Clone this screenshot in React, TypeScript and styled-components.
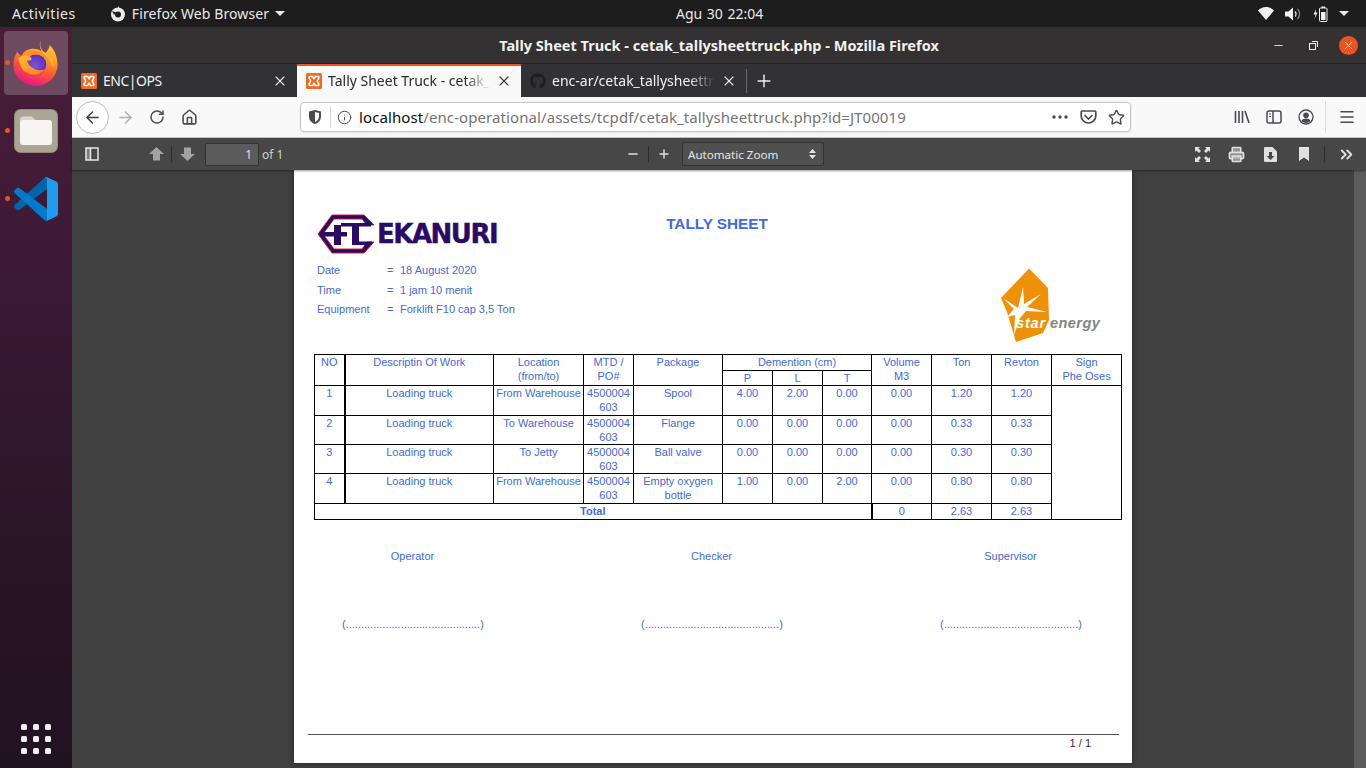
import React from 'react';
import styled, { createGlobalStyle } from 'styled-components';
import {
  ArrowLeft, ArrowRight, RotateCw, House, Info, Star, Menu, X, Plus, Minus,
  ChevronsRight, Printer,
} from 'lucide-react';
import { FaGithub } from 'react-icons/fa';

const GlobalStyle = createGlobalStyle`
  html, body { margin: 0; padding: 0; width: 1366px; height: 768px; overflow: hidden; background: #404040; }
  * { box-sizing: border-box; }
`;

const UI_FONT = `"Noto Sans", "Open Sans", sans-serif`;
const DOC_FONT = `"Liberation Sans", Arial, sans-serif`;
const DOC_BLUE = '#4169e1';

const Desktop = styled.div`
  width: 1366px;
  height: 768px;
  display: flex;
  flex-direction: column;
  font-family: ${UI_FONT};
  overflow: hidden;
`;

/* ---------- gnome top bar ---------- */
const TopBar = styled.div`
  height: 27px;
  flex: none;
  background: #1d1d1d;
  color: #e9e9e9;
  font-size: 14px;
  display: flex;
  align-items: center;
  padding: 0 12px;
`;
const TopLeft = styled.div`
  width: 664px;
  flex: none;
  display: flex;
  align-items: center;
`;
const Activities = styled.span`
  letter-spacing: 0.55px;
`;
const AppMenu = styled.div`
  display: flex;
  align-items: center;
  gap: 6px;
  margin-left: 34px;
  letter-spacing: 0.1px;
`;
const Caret = styled.span`
  width: 0;
  height: 0;
  border-left: 5px solid transparent;
  border-right: 5px solid transparent;
  border-top: 5px solid #e9e9e9;
`;
const Clock = styled.div`
  word-spacing: 1px;
`;
const TopRight = styled.div`
  margin-left: auto;
  display: flex;
  align-items: center;
  gap: 11px;
  padding-right: 5px;
`;
const Body = styled.div`
  flex: 1;
  display: flex;
  min-height: 0;
`;

/* ---------- dock ---------- */
const Dock = styled.div`
  width: 72px;
  flex: none;
  background: linear-gradient(180deg, #4b1e38 0%, #3c1a36 30%, #2a1528 70%, #211222 100%);
  display: flex;
  flex-direction: column;
  align-items: center;
  padding-top: 4px;
  padding-bottom: 14px;
`;
const DockItem = styled.div<{ $active?: boolean }>`
  position: relative;
  width: 64px;
  height: 64px;
  margin-bottom: 4px;
  border-radius: 4px;
  background: ${({ $active }) => ($active ? 'rgba(255,255,255,0.2)' : 'transparent')};
  display: flex;
  align-items: center;
  justify-content: center;
`;
const DockDot = styled.span`
  position: absolute;
  left: 1px;
  top: 29px;
  width: 5px;
  height: 5px;
  border-radius: 50%;
  background: #e95420;
`;
const AppGrid = styled.div`
  margin-top: auto;
  display: grid;
  grid-template-columns: repeat(3, 6px);
  grid-auto-rows: 6px;
  gap: 6px;
`;
const AppGridDot = styled.span`
  background: #f0eeee;
  border-radius: 1.5px;
`;

/* ---------- firefox window ---------- */
const Win = styled.div`
  flex: 1;
  min-width: 0;
  display: flex;
  flex-direction: column;
`;
const TitleBar = styled.div`
  height: 37px;
  flex: none;
  background: #333132;
  border-bottom: 1px solid #232323;
  position: relative;
  display: flex;
  align-items: center;
  justify-content: center;
  color: #f2f2f2;
  font-size: 14.5px;
  font-weight: 700;
  padding-bottom: 1px;
`;
const WinControls = styled.div`
  position: absolute;
  right: 8px;
  top: 9px;
  display: flex;
  align-items: center;
  gap: 16px;
`;
const WinButton = styled.span`
  width: 19px;
  height: 19px;
  display: flex;
  align-items: center;
  justify-content: center;
`;
const CloseRound = styled(WinButton)`
  background: #e95420;
  border-radius: 50%;
`;
const TabBar = styled.div`
  height: 33px;
  flex: none;
  background: #323234;
  display: flex;
  align-items: stretch;
  color: #f1f1f1;
  font-size: 14px;
`;
const Tab = styled.div<{ $active?: boolean; $width: number }>`
  width: ${({ $width }) => $width}px;
  flex: none;
  display: flex;
  align-items: center;
  gap: 6px;
  padding: 0 9px 2px 9px;
  background: ${({ $active }) => ($active ? '#f9f9fa' : 'transparent')};
  color: ${({ $active }) => ($active ? '#29292b' : '#f1f1f1')};
  border-top: 2px solid ${({ $active }) => ($active ? '#e95420' : 'transparent')};
`;
const TabLabel = styled.span<{ $tight?: boolean }>`
  flex: 1;
  min-width: 0;
  white-space: nowrap;
  overflow: hidden;
  letter-spacing: ${({ $tight }) => ($tight ? '-0.5px' : '0')};
  mask-image: ${({ $tight }) => ($tight ? 'none' : 'linear-gradient(90deg, #000 84%, transparent 100%)')};
`;
const TabSeparator = styled.span`
  width: 1px;
  margin: 5px 0 4px;
  background: #6b6b6d;
`;
const NewTab = styled.div`
  width: 33px;
  display: flex;
  align-items: center;
  justify-content: center;
`;
const Favicon = styled.svg`
  flex: none;
`;

/* nav toolbar */
const NavBar = styled.div`
  height: 41px;
  flex: none;
  background: #f9f9fa;
  border-bottom: 1px solid #c8c8c9;
  display: flex;
  align-items: center;
  padding-left: 4px;
  color: #4a4a4f;
`;
const Slot = styled.div<{ $w?: number; $ml?: number }>`
  width: ${({ $w }) => $w ?? 32}px;
  height: 32px;
  flex: none;
  margin-left: ${({ $ml }) => $ml ?? 0}px;
  display: flex;
  align-items: center;
  justify-content: center;
`;
const BackCircle = styled.div`
  width: 33px;
  height: 33px;
  border-radius: 50%;
  border: 1px solid #bcbcbd;
  background: #fdfdfd;
  display: flex;
  align-items: center;
  justify-content: center;
`;
const UrlBox = styled.div`
  width: 831px;
  height: 30px;
  margin-left: 95px;
  flex: none;
  background: #fff;
  border: 1px solid #c4c4c5;
  border-radius: 4px;
  box-shadow: 0 1px 3px rgba(0, 0, 0, 0.08);
  display: flex;
  align-items: center;
  font-size: 15px;
  padding-left: 4px;
`;
const UrlDivider = styled.span`
  width: 1px;
  height: 22px;
  background: #d6d6d7;
  margin: 0 4px 0 5px;
`;
const UrlHost = styled.span`
  color: #0c0c0d;
  margin-left: 6px;
  letter-spacing: 0.1px;
`;
const UrlPath = styled.span`
  color: #737373;
  letter-spacing: 0.09px;
`;
const UrlTools = styled.div`
  margin-left: auto;
  display: flex;
  align-items: center;
`;
const NavDivider = styled.span`
  width: 1px;
  height: 32px;
  background: #dcdcdd;
  margin: 0 5px 0 3px;
`;

/* pdf toolbar */
const PdfBar = styled.div`
  height: 32px;
  flex: none;
  background: #474747;
  box-shadow: 0 1px 2px rgba(0, 0, 0, 0.4);
  display: flex;
  align-items: center;
  padding-left: 4px;
  color: #d9d9d9;
  font-size: 12px;
  position: relative;
`;
const PdfDivider = styled.span<{ $ml?: number; $mr?: number }>`
  width: 1px;
  height: 16px;
  flex: none;
  background: #2b2b2b;
  margin-left: ${({ $ml }) => $ml ?? 0}px;
  margin-right: ${({ $mr }) => $mr ?? 0}px;
`;
const PageInput = styled.div`
  width: 54px;
  height: 23px;
  flex: none;
  margin-left: 3px;
  background: #5b5b5b;
  border: 1px solid #333;
  border-radius: 2px;
  font-size: 12px;
  text-align: right;
  line-height: 21px;
  padding-right: 6px;
  color: #e0e0e0;
`;
const OfPages = styled.span`
  margin-left: 3px;
  width: 356px;
  flex: none;
  color: #d0d0d0;
`;
const ZoomSelect = styled.div`
  width: 142px;
  height: 24px;
  flex: none;
  margin-left: 3px;
  background: #505050;
  border: 1px solid #333;
  border-radius: 2px;
  display: flex;
  align-items: center;
  justify-content: space-between;
  padding: 0 7px 0 5px;
  font-size: 11.6px;
  color: #e6e6e6;
`;
const Updown = styled.span`
  display: flex;
  flex-direction: column;
  gap: 2px;
`;
const RightTools = styled.div`
  margin-left: auto;
  display: flex;
  align-items: center;
  padding-right: 4px;
`;

/* ---------- viewer and pdf page ---------- */
const Viewer = styled.div`
  flex: 1;
  min-height: 0;
  background: #404040;
  display: flex;
  overflow: hidden;
`;
const PageArea = styled.div`
  flex: 1;
  min-width: 0;
  display: flex;
  justify-content: center;
`;
const Scrollbar = styled.div`
  width: 12px;
  flex: none;
  background: #5c5c5c;
`;
const Page = styled.div`
  width: 838px;
  height: 593px;
  background: #fff;
  box-shadow: 0 0 6px rgba(0, 0, 0, 0.45);
  font-family: ${DOC_FONT};
  font-size: 11px;
  color: ${DOC_BLUE};
  padding: 44px 11px 0 20px;
  display: flex;
  flex-direction: column;
`;
const DocHeader = styled.div`
  height: 140px;
  flex: none;
  display: grid;
  grid-template-columns: 300px 206px 1fr;
`;
const HeaderLeft = styled.div`
  padding-left: 3px;
  white-space: nowrap;
`;
const CompanyLogo = styled.div`
  height: 40px;
  display: flex;
  align-items: center;
  gap: 2px;
`;
const CompanyName = styled.span`
  font-family: "DejaVu Sans", sans-serif;
  font-weight: 700;
  font-size: 26px;
  line-height: 40px;
  color: #2a0a66;
  letter-spacing: -1.5px;
  -webkit-text-stroke: 0.4px #2a0a66;
`;
const InfoList = styled.div`
  margin-top: 9px;
  display: flex;
  flex-direction: column;
  gap: 5.5px;
`;
const InfoRow = styled.div`
  display: grid;
  grid-template-columns: 70px 13px 1fr;
  line-height: 14px;
`;
const DocTitle = styled.div`
  font-size: 15.3px;
  font-weight: 700;
  text-align: center;
  padding-top: 1px;
  line-height: 18px;
`;
const StarLogo = styled.div`
  position: relative;
  width: 102px;
  height: 76px;
  margin-top: 54px;
  justify-self: end;
  margin-right: 19px;
`;
const LogoWord = styled.span`
  position: absolute;
  top: 47px;
  font-weight: 700;
  font-style: italic;
  font-size: 14.6px;
  white-space: nowrap;
`;
const StarWord = styled(LogoWord)`
  left: 16px;
  letter-spacing: 0.8px;
  color: #fff;
`;
const EnergyWord = styled(LogoWord)`
  left: 50px;
  letter-spacing: 0.4px;
  color: #848484;
`;

const Table = styled.table`
  width: 808px;
  border-collapse: collapse;
  table-layout: fixed;
  flex: none;
`;
const Th = styled.th<{ $h?: number; $compact?: boolean; $thick?: boolean }>`
  border: 1px solid #000;
  border-right-width: ${({ $thick }) => ($thick ? 2 : 1)}px;
  font-weight: 400;
  vertical-align: top;
  text-align: center;
  line-height: ${({ $compact }) => ($compact ? '13px' : '13.5px')};
  padding: 1px 0 0;
  height: ${({ $h }) => $h ?? 15}px;
`;
const Td = styled.td<{ $h?: number; $bold?: boolean }>`
  border: 1px solid #000;
  vertical-align: top;
  text-align: center;
  line-height: 13.5px;
  padding: 1px 0 0;
  height: ${({ $h }) => $h ?? 29}px;
  font-weight: ${({ $bold }) => ($bold ? 700 : 400)};
  &:first-child { border-right-width: 2px; }
`;
const Signatures = styled.div`
  display: grid;
  grid-template-columns: repeat(3, 141px);
  justify-content: space-between;
  width: 739px;
  margin: 29px 0 0 28px;
  text-align: center;
  line-height: 14px;
`;
const SignColumn = styled.div`
  display: flex;
  flex-direction: column;
  gap: 54px;
`;
const PageFooter = styled.div`
  margin: auto 2px 0 -6px;
  border-top: 1px solid #555;
  height: 29px;
  text-align: right;
  padding: 1px 28px 0 0;
  line-height: 14px;
  color: #1b2a5c;
`;

/* ---------- drawings ---------- */
const FirefoxLogo: React.FC = () => (
  <svg width="46" height="47" viewBox="0 0 46 48">
    <defs>
      <linearGradient id="ffBody" x1="0.75" y1="0" x2="0.35" y2="1">
        <stop offset="0" stopColor="#ffd43a" />
        <stop offset="0.35" stopColor="#ff9a26" />
        <stop offset="0.65" stopColor="#ff4f3d" />
        <stop offset="1" stopColor="#e31587" />
      </linearGradient>
      <radialGradient id="ffGlobe" cx="0.45" cy="0.55" r="0.6">
        <stop offset="0" stopColor="#7a52e0" />
        <stop offset="1" stopColor="#5a2fb5" />
      </radialGradient>
      <linearGradient id="ffFox" x1="0" y1="0" x2="1" y2="1">
        <stop offset="0" stopColor="#ffc22e" />
        <stop offset="1" stopColor="#ff7a1f" />
      </linearGradient>
    </defs>
    <path
      d="M28 1C26 7 29 11 33 13C35 10 37 8 37 5C42 10 45 17 45 25C45 37 35 47 23 47C10 47 0 37 0 25C0 20 1 16 4 12C5 14 6 15 8 16C11 11 15 9 20 9C24 9 27 10 29 12C27 8 26 4 28 1Z"
      fill="url(#ffBody)"
    />
    <path d="M30 12C38 15 42 22 41 29C39 22 35 17 30 15Z" fill="#ffb52e" />
    <circle cx="23" cy="25" r="10.5" fill="url(#ffGlobe)" />
    <path
      d="M5 19C9 15 15 15 18 18C19.5 20 17 21.5 14 21C15 27 23 33 32 30C27 37 16 37 10 31C7 27 6 23 5 19Z"
      fill="url(#ffFox)"
    />
    <path d="M18 12C27 10 34 15 35 23C33 17 27 14 18 15Z" fill="#ff8a24" />
  </svg>
);

const FilesIcon: React.FC = () => (
  <svg width="44" height="44" viewBox="0 0 44 44">
    <rect x="0.5" y="0.5" width="43" height="43" rx="6" fill="#aba594" stroke="#8f8a7b" />
    <path d="M6 10.5a3 3 0 0 1 3-3h9l4 4v4H6Z" fill="#d9d5cb" />
    <rect x="6" y="11" width="32" height="25" rx="3" fill="#f6f5f2" />
  </svg>
);

const VsCodeIcon: React.FC = () => (
  <svg width="44" height="44" viewBox="0 0 100 100">
    <path d="M96.5 10.8 75.9.9c-2.4-1.15-5.2-.66-7.1 1.2L1.3 63.6c-1.8 1.65-1.8 4.5 0 6.15l5.5 5c1.5 1.35 3.7 1.45 5.3.24L93.4 13.5c2.7-2.07 6.6-.12 6.6 3.3v-.24c0-2.4-1.4-4.6-3.5-5.76Z" fill="#0065a9" />
    <path d="M96.5 89.2 75.9 99.1c-2.4 1.15-5.2.66-7.1-1.2L1.3 36.4c-1.8-1.65-1.8-4.5 0-6.15l5.5-5c1.5-1.35 3.7-1.45 5.3-.24L93.4 86.5c2.7 2.07 6.6.12 6.6-3.3v.24c0 2.4-1.4 4.6-3.5 5.76Z" fill="#007acc" />
    <path d="M75.9 99.1c-2.4 1.14-5.2.66-7.1-1.2 2.3 2.3 6.2.67 6.2-2.6V4.7c0-3.27-3.9-4.9-6.2-2.6 1.9-1.87 4.7-2.36 7.1-1.2l20.6 9.9C98.6 11.8 100 14 100 16.4v67.2c0 2.4-1.4 4.6-3.5 5.6Z" fill="#1f9cf0" />
  </svg>
);

const XamppIcon: React.FC = () => (
  <Favicon width="16" height="16" viewBox="0 0 16 16">
    <rect width="16" height="16" rx="1.5" fill="#f26b21" />
    <path d="M4 3.5h2.6L8 5.6 9.4 3.5H12a1 1 0 0 1 .9 1.4L11.3 8l1.6 3.1a1 1 0 0 1-.9 1.4H9.4L8 10.4l-1.4 2.1H4a1 1 0 0 1-.9-1.4L4.7 8 3.1 4.9A1 1 0 0 1 4 3.5Z" fill="none" stroke="#fff" strokeWidth="1.5" />
  </Favicon>
);

const ShieldIcon: React.FC = () => (
  <svg width="16" height="16" viewBox="0 0 16 16" fill="#4a4a4f">
    <path d="M8 1 2 2.5v5C2 11 4.5 14 8 15c3.5-1 6-4 6-7.5v-5Zm0 2 4 1v3.5c0 2.4-1.6 4.5-4 5.4Z" fillRule="evenodd" />
  </svg>
);

const PocketIcon: React.FC = () => (
  <svg width="17" height="16" viewBox="0 0 17 16" fill="none" stroke="#4a4a4f" strokeWidth="1.7">
    <path d="M2 2h13a1 1 0 0 1 .8.9v4.1c0 3.8-3.3 7-7.3 7S1.2 10.8 1.2 7V2.9A1 1 0 0 1 2 2Z" />
    <path d="M5 6.5 8.500 10 12 6.500" strokeLinecap="round" />
  </svg>
);

const LibraryIcon: React.FC = () => (
  <svg width="16" height="16" viewBox="0 0 16 16" stroke="#4a4a4f" strokeWidth="1.6">
    <path d="M1.5 2v12M5 2v12M8.500 2v12M11 2l4 12" />
  </svg>
);

const SidebarIcon: React.FC = () => (
  <svg width="16" height="16" viewBox="0 0 16 16" fill="none" stroke="#4a4a4f" strokeWidth="1.5">
    <rect x="1" y="2" width="14" height="12" rx="2" />
    <path d="M7 2v12" />
    <path d="M3 5h2M3 7.500h2" strokeWidth="1.2" />
  </svg>
);

const AccountIcon: React.FC = () => (
  <svg width="16" height="16" viewBox="0 0 16 16">
    <circle cx="8" cy="8" r="7" fill="none" stroke="#4a4a4f" strokeWidth="1.3" />
    <circle cx="8" cy="6.3" r="2.8" fill="#4a4a4f" />
    <path d="M3.3 12c1-2 2.7-2.600 4.700-2.600s3.700.6 4.700 2.600A6.500 6.500 0 0 1 8 14a6.500 6.500 0 0 1-4.700-2Z" fill="#4a4a4f" />
  </svg>
);

const PdfSidebarIcon: React.FC = () => (
  <svg width="14" height="14" viewBox="0 0 14 14" fill="none" stroke="#e6e6e6" strokeWidth="1.5">
    <rect x="1" y="1" width="12" height="12" />
    <path d="M5.5 1v12" />
    <rect x="1" y="1" width="4.5" height="12" fill="#e6e6e6" fillOpacity="0.35" stroke="none" />
  </svg>
);

const UpArrow: React.FC<{ $down?: boolean }> = ({ $down }) => (
  <svg width="15" height="14" viewBox="0 0 15 14" fill="#a3a3a3">
    <path d={$down ? 'M7.5 14 15 7h-4V.5H4V7H0Z' : 'M7.5 0 15 7h-4v6.5H4V7H0Z'} />
  </svg>
);

const FullscreenIcon: React.FC = () => (
  <svg width="15" height="15" viewBox="0 0 15 15" fill="#e0e0e0">
    <path d="M0 0h5L3.5 1.5 6 4 4 6 1.5 3.5 0 5ZM15 0v5l-1.5-1.5L11 6 9 4l2.5-2.5L10 0ZM0 15v-5l1.5 1.5L4 9l2 2-2.5 2.5L5 15ZM15 15h-5l1.5-1.5L9 11l2-2 2.5 2.5L15 10Z" />
  </svg>
);

const DownloadIcon: React.FC = () => (
  <svg width="13" height="15" viewBox="0 0 13 15" fill="#e0e0e0">
    <path d="M0 1a1 1 0 0 1 1-1h7.5L13 4.5V14a1 1 0 0 1-1 1H1a1 1 0 0 1-1-1ZM5 5v4H2.5l4 4 4-4H8V5Z" fillRule="evenodd" />
  </svg>
);

const FilledBookmark: React.FC = () => (
  <svg width="10" height="14" viewBox="0 0 10 14" fill="#e0e0e0">
    <path d="M0 0h10v14L5 10.5 0 14Z" />
  </svg>
);

const EkanuriMark: React.FC = () => (
  <svg width="58" height="40" viewBox="0 0 58 40">
    <path d="M15 1H47L57 11H50L45 5H17L6 20 17 35H45L50 28H57L47 39H15L1 20Z" fill="#2a0a66" stroke="#d01020" strokeWidth="0.9" />
    <path d="M7 18H17V11H24V18H30V22.5H24V31H17V22.5H7L5.5 20Z" fill="#2a0a66" />
    <path d="M24 9H54V12.5H42V31H35V12.5H24Z" fill="#2a0a66" />
    <path d="M42 27.5H55V31H42Z" fill="#2a0a66" />
  </svg>
);

const StarShape: React.FC = () => (
  <svg width="102" height="76" viewBox="0 0 102 76">
    <path d="M29 0.5 48 20 49 52 43 65 16 74 7 44 1 30Z" fill="#ee9008" />
    <path d="M18 40 23 19 24 36 41 26 27 39 47 44 26 43 20 50 14 67 15 47 7 49 14 41 3 30Z" fill="#fff" />
  </svg>
);

const TrayWifi: React.FC = () => (
  <svg width="16" height="13" viewBox="0 0 16 13" fill="#f0f0f0">
    <path d="M8 13 0 3.5C2 1.3 4.8 0 8 0s6 1.3 8 3.5Z" />
  </svg>
);

const TrayVolume: React.FC = () => (
  <svg width="17" height="14" viewBox="0 0 17 14">
    <path d="M0 4.5H3.5L8 .5V13.5L3.5 9.5H0Z" fill="#f0f0f0" />
    <path d="M10 4.5a3.5 3.5 0 0 1 0 5" fill="none" stroke="#f0f0f0" strokeWidth="1.2" />
    <path d="M12.5 2a7 7 0 0 1 0 10" fill="none" stroke="#8a8a8a" strokeWidth="1.2" />
  </svg>
);

const TrayBattery: React.FC = () => (
  <svg width="15" height="16" viewBox="0 0 15 16">
    <path d="M3 3 0.5 8.5H2.5L1.5 13 4.5 6.5H2.5Z" fill="#f0f0f0" />
    <rect x="6.5" y="2" width="7.5" height="13.5" rx="1" fill="none" stroke="#f0f0f0" />
    <rect x="8.5" y="0.5" width="3.5" height="1.5" fill="#f0f0f0" />
    <rect x="8" y="6" width="4.5" height="8" fill="#f0f0f0" />
  </svg>
);

/* ---------- data ---------- */
const rows = [
  { no: 1, h: 30, location: 'From Warehouse', pack: 'Spool', p: '4.00', l: '2.00', t: '0.00', vol: '0.00', ton: '1.20', rev: '1.20' },
  { no: 2, h: 29, location: 'To Warehouse', pack: 'Flange', p: '0.00', l: '0.00', t: '0.00', vol: '0.00', ton: '0.33', rev: '0.33' },
  { no: 3, h: 29, location: 'To Jetty', pack: 'Ball valve', p: '0.00', l: '0.00', t: '0.00', vol: '0.00', ton: '0.30', rev: '0.30' },
  { no: 4, h: 30, location: 'From Warehouse', pack: 'Empty oxygen bottle', p: '1.00', l: '0.00', t: '2.00', vol: '0.00', ton: '0.80', rev: '0.80' },
];
const colWidths = [30, 149, 90, 50, 89, 50, 50, 49, 60, 60, 60, 70];
const signers = ['Operator', 'Checker', 'Supervisor'];

const App: React.FC = () => (
  <Desktop>
    <GlobalStyle />
    <TopBar>
      <TopLeft>
        <Activities>Activities</Activities>
        <AppMenu>
          <svg width="16" height="16" viewBox="0 0 16 16">
            <circle cx="8" cy="8.5" r="7" fill="#eaeaea" />
            <circle cx="8" cy="8.5" r="3" fill="#1d1d1d" />
            <path d="M2 5 6 6.5 4 9Z" fill="#1d1d1d" />
            <path d="M8 0 10 3 8 4Z" fill="#eaeaea" />
          </svg>
          Firefox Web Browser
          <Caret />
        </AppMenu>
      </TopLeft>
      <Clock>Agu 30 22:04</Clock>
      <TopRight>
        <TrayWifi />
        <TrayVolume />
        <TrayBattery />
        <Caret />
      </TopRight>
    </TopBar>
    <Body>
      <Dock>
        <DockItem $active>
          <DockDot />
          <FirefoxLogo />
        </DockItem>
        <DockItem>
          <DockDot />
          <FilesIcon />
        </DockItem>
        <DockItem>
          <DockDot />
          <VsCodeIcon />
        </DockItem>
        <AppGrid>
          {Array.from({ length: 9 }, (_, i) => (
            <AppGridDot key={i} />
          ))}
        </AppGrid>
      </Dock>
      <Win>
        <TitleBar>
          Tally Sheet Truck - cetak_tallysheettruck.php - Mozilla Firefox
          <WinControls>
            <WinButton>
              <Minus size={13} color="#f0f0f0" strokeWidth={1.6} />
            </WinButton>
            <WinButton>
              <svg width="9" height="9" viewBox="0 0 9 9" fill="none" stroke="#f0f0f0">
                <rect x="0.5" y="2.5" width="6" height="6" />
                <path d="M3 .5h5.5V6" />
              </svg>
            </WinButton>
            <CloseRound>
              <X size={13} color="#fff" strokeWidth={1.6} />
            </CloseRound>
          </WinControls>
        </TitleBar>
        <TabBar>
          <Tab $width={225}>
            <XamppIcon />
            <TabLabel $tight>ENC|OPS</TabLabel>
            <X size={16} strokeWidth={1.7} color="#e8e8e8" />
          </Tab>
          <Tab $active $width={224}>
            <XamppIcon />
            <TabLabel>Tally Sheet Truck - cetak_tallysheettruck</TabLabel>
            <X size={16} strokeWidth={1.7} color="#3a3a3c" />
          </Tab>
          <Tab $width={225}>
            <FaGithub size={16} color="#1d1f21" />
            <TabLabel>enc-ar/cetak_tallysheettruck</TabLabel>
            <X size={16} strokeWidth={1.7} color="#e8e8e8" />
          </Tab>
          <TabSeparator />
          <NewTab>
            <Plus size={20} color="#f1f1f1" strokeWidth={1.7} />
          </NewTab>
        </TabBar>
        <NavBar>
          <Slot $w={33}>
            <BackCircle>
              <ArrowLeft size={19} strokeWidth={1.9} color="#3d3d40" />
            </BackCircle>
          </Slot>
          <Slot>
            <ArrowRight size={19} strokeWidth={1.9} color="#b1b1b3" />
          </Slot>
          <Slot>
            <RotateCw size={16} strokeWidth={2.2} />
          </Slot>
          <Slot>
            <House size={17} strokeWidth={2.2} />
          </Slot>
          <UrlBox>
            <Slot $w={20}>
              <ShieldIcon />
            </Slot>
            <UrlDivider />
            <Slot $w={18}>
              <Info size={15} strokeWidth={1.6} />
            </Slot>
            <UrlHost>localhost</UrlHost>
            <UrlPath>/enc-operational/assets/tcpdf/cetak_tallysheettruck.php?id=JT00019</UrlPath>
            <UrlTools>
              <Slot $w={28}>
                <svg width="16" height="4" viewBox="0 0 16 4" fill="#4a4a4f">
                  <circle cx="2" cy="2" r="1.7" />
                  <circle cx="8" cy="2" r="1.7" />
                  <circle cx="14" cy="2" r="1.7" />
                </svg>
              </Slot>
              <Slot $w={28}>
                <PocketIcon />
              </Slot>
              <Slot $w={28}>
                <Star size={17} strokeWidth={2} />
              </Slot>
            </UrlTools>
          </UrlBox>
          <Slot $ml={95}>
            <LibraryIcon />
          </Slot>
          <Slot>
            <SidebarIcon />
          </Slot>
          <Slot>
            <AccountIcon />
          </Slot>
          <NavDivider />
          <Slot>
            <Menu size={18} strokeWidth={2} />
          </Slot>
        </NavBar>
        <PdfBar>
          <Slot>
            <PdfSidebarIcon />
          </Slot>
          <Slot $w={30} $ml={33}>
            <UpArrow />
          </Slot>
          <PdfDivider />
          <Slot $w={30}>
            <UpArrow $down />
          </Slot>
          <PageInput>1</PageInput>
          <OfPages>of 1</OfPages>
          <Slot $w={30}>
            <Minus size={14} strokeWidth={2.5} color="#e0e0e0" />
          </Slot>
          <PdfDivider />
          <Slot $w={30}>
            <Plus size={14} strokeWidth={2.5} color="#e0e0e0" />
          </Slot>
          <ZoomSelect>
            Automatic Zoom
            <Updown>
              <svg width="7" height="4" viewBox="0 0 7 4" fill="#e6e6e6">
                <path d="M3.5 0 7 4H0Z" />
              </svg>
              <svg width="7" height="4" viewBox="0 0 7 4" fill="#e6e6e6">
                <path d="M0 0h7L3.5 4Z" />
              </svg>
            </Updown>
          </ZoomSelect>
          <RightTools>
            <Slot $w={34}>
              <FullscreenIcon />
            </Slot>
            <Slot $w={34}>
              <Printer size={17} strokeWidth={2.2} color="#e0e0e0" fill="#e0e0e0" fillOpacity={0.5} />
            </Slot>
            <Slot $w={34}>
              <DownloadIcon />
            </Slot>
            <Slot $w={34}>
              <FilledBookmark />
            </Slot>
            <PdfDivider $ml={3} $mr={5} />
            <Slot>
              <ChevronsRight size={19} strokeWidth={2.4} color="#e0e0e0" />
            </Slot>
          </RightTools>
        </PdfBar>
        <Viewer>
          <PageArea>
            <Page>
              <DocHeader>
                <HeaderLeft>
                  <CompanyLogo>
                    <EkanuriMark />
                    <CompanyName>EKANURI</CompanyName>
                  </CompanyLogo>
                  <InfoList>
                    <InfoRow>
                      <span>Date</span>
                      <span>=</span>
                      <span>18 August 2020</span>
                    </InfoRow>
                    <InfoRow>
                      <span>Time</span>
                      <span>=</span>
                      <span>1 jam 10 menit</span>
                    </InfoRow>
                    <InfoRow>
                      <span>Equipment</span>
                      <span>=</span>
                      <span>Forklift F10 cap 3,5 Ton</span>
                    </InfoRow>
                  </InfoList>
                </HeaderLeft>
                <DocTitle>TALLY SHEET</DocTitle>
                <StarLogo>
                  <StarShape />
                  <StarWord>star</StarWord>
                  <EnergyWord>energy</EnergyWord>
                </StarLogo>
              </DocHeader>
              <Table>
                <colgroup>
                  {colWidths.map((w, i) => (
                    <col key={i} style={{ width: w }} />
                  ))}
                </colgroup>
                <thead>
                  <tr>
                    <Th rowSpan={2} $thick>NO</Th>
                    <Th rowSpan={2}>Descriptin Of Work</Th>
                    <Th rowSpan={2}>
                      Location
                      <br />
                      (from/to)
                    </Th>
                    <Th rowSpan={2}>
                      MTD /
                      <br />
                      PO#
                    </Th>
                    <Th rowSpan={2}>Package</Th>
                    <Th colSpan={3} $h={16}>Demention (cm)</Th>
                    <Th rowSpan={2}>
                      Volume
                      <br />
                      M3
                    </Th>
                    <Th rowSpan={2}>Ton</Th>
                    <Th rowSpan={2}>Revton</Th>
                    <Th rowSpan={2}>
                      Sign
                      <br />
                      Phe Oses
                    </Th>
                  </tr>
                  <tr>
                    <Th $compact>P</Th>
                    <Th $compact>L</Th>
                    <Th $compact>T</Th>
                  </tr>
                </thead>
                <tbody>
                  {rows.map((r, i) => (
                    <tr key={r.no}>
                      <Td $h={r.h}>{r.no}</Td>
                      <Td $h={r.h}>Loading truck</Td>
                      <Td $h={r.h}>{r.location}</Td>
                      <Td $h={r.h}>
                        4500004
                        <br />
                        603
                      </Td>
                      <Td $h={r.h}>{r.pack}</Td>
                      <Td $h={r.h}>{r.p}</Td>
                      <Td $h={r.h}>{r.l}</Td>
                      <Td $h={r.h}>{r.t}</Td>
                      <Td $h={r.h}>{r.vol}</Td>
                      <Td $h={r.h}>{r.ton}</Td>
                      <Td $h={r.h}>{r.rev}</Td>
                      {i === 0 && <Td rowSpan={5} />}
                    </tr>
                  ))}
                  <tr>
                    <Td colSpan={8} $h={16} $bold>
                      Total
                    </Td>
                    <Td $h={16}>0</Td>
                    <Td $h={16}>2.63</Td>
                    <Td $h={16}>2.63</Td>
                  </tr>
                </tbody>
              </Table>
              <Signatures>
                {signers.map((s) => (
                  <SignColumn key={s}>
                    <span>{s}</span>
                    <span>(............................................)</span>
                  </SignColumn>
                ))}
              </Signatures>
              <PageFooter>1 / 1</PageFooter>
            </Page>
          </PageArea>
          <Scrollbar />
        </Viewer>
      </Win>
    </Body>
  </Desktop>
);

export default App;
